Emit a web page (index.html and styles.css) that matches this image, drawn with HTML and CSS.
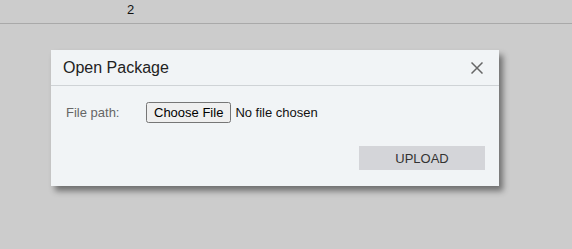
FILE: index.html
```html
<!DOCTYPE html>
<html lang="en">
<head>
    <meta charset="UTF-8">
    <title>Open Package</title>
    <link rel="stylesheet" href="styles.css">
</head>
<body>
    <div class="topbar">
        <div class="cell">2</div>
    </div>
    <div class="dialog">
        <div class="dialog-header">
            <span class="dialog-title">Open Package</span>
            <button class="close" aria-label="Close">
                <svg width="12" height="12" viewBox="0 0 12 12">
                    <path d="M0.5 0.5 L11.5 11.5 M11.5 0.5 L0.5 11.5" stroke="#666" stroke-width="1.5" fill="none"/>
                </svg>
            </button>
        </div>
        <div class="dialog-body">
            <div class="field">
                <label class="field-label" for="file">File path:</label>
                <input type="file" id="file" class="file-input">
            </div>
            <div class="actions">
                <button class="upload">UPLOAD</button>
            </div>
        </div>
    </div>
</body>
</html>
```

FILE: styles.css
```css
body {
    margin: 0;
    background: #cccccc;
    font-family: "Liberation Sans", Arial, sans-serif;
    height: 249px;
    overflow: hidden;
}
.topbar {
    height: 23px;
    border-bottom: 1px solid #a9a9a9;
    display: flex;
}
.cell {
    padding-left: 127px;
    padding-top: 2px;
    font-size: 13px;
    color: #111;
}
.dialog {
    margin: 26px 0 0 51px;
    width: 448px;
    height: 136px;
    background: #f1f4f6;
    box-shadow: 4px 5px 6px rgba(0, 0, 0, 0.45);
}
.dialog-header {
    height: 35px;
    border-bottom: 1px solid #cfd3d6;
    display: flex;
    align-items: center;
    justify-content: space-between;
    padding: 0 16px 0 12px;
}
.dialog-title {
    font-size: 16px;
    color: #222;
}
.close {
    border: none;
    background: none;
    padding: 0;
    width: 12px;
    height: 12px;
    display: flex;
    cursor: pointer;
}
.dialog-body {
    padding: 15px 14px 0 15px;
}
.field {
    display: flex;
    align-items: center;
    height: 22px;
}
.field-label {
    width: 80px;
    font-size: 13px;
    color: #666;
}
.file-input {
    font-family: "Liberation Sans", Arial, sans-serif;
    font-size: 13px;
    color: #111;
}
.actions {
    display: flex;
    justify-content: flex-end;
    margin-top: 23px;
}
.upload {
    width: 126px;
    height: 24px;
    border: none;
    background: #d4d5d9;
    color: #333;
    font-family: "Liberation Sans", Arial, sans-serif;
    font-size: 13px;
    cursor: pointer;
}
```
